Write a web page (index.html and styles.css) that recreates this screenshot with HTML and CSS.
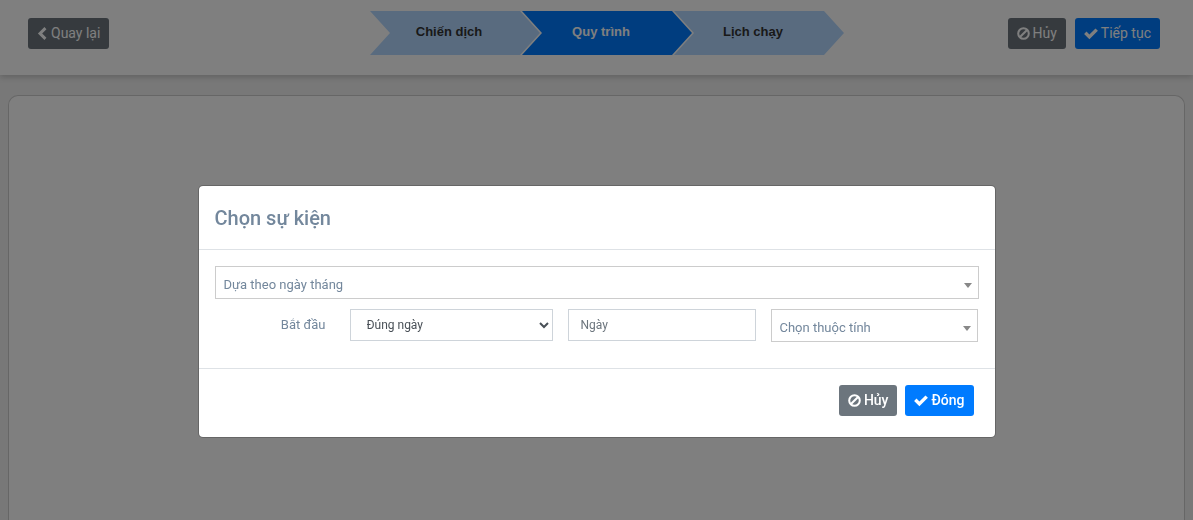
FILE: index.html
```
<!DOCTYPE html>
<html lang="vi">
<head>
<meta charset="utf-8">
<meta name="viewport" content="width=device-width, initial-scale=1">
<title>Chọn sự kiện</title>
<link rel="stylesheet" href="styles.css">
</head>
<body>
<svg class="sprite" aria-hidden="true">
  <symbol id="icon-back" viewBox="0 0 10 14"><path d="M9.800 2.300 5.200 7l4.600 4.700-2.200 2.200L.6 7 7.600.1z"/></symbol>
  <symbol id="icon-ban" viewBox="0 0 14 14"><circle cx="7" cy="7" r="5.700" fill="none" stroke="currentColor" stroke-width="2.200"/><path d="M3.200 10.800 10.800 3.200" fill="none" stroke="currentColor" stroke-width="2.200"/></symbol>
  <symbol id="icon-check" viewBox="0 0 14 14"><path d="M2.500 4.600 5.400 7.400 11.500 1.400 13.900 3.800 5.400 12.200.1 7z"/></symbol>
</svg>

<header class="topbar">
  <div class="topbar-side">
    <button type="button" class="btn btn-secondary"><svg class="icon icon-narrow"><use href="#icon-back"/></svg>Quay lại</button>
  </div>
  <ol class="steps">
    <li class="step">Chiến dịch</li>
    <li class="step step-active" aria-current="step">Quy trình</li>
    <li class="step">Lịch chạy</li>
  </ol>
  <div class="topbar-side topbar-end">
    <button type="button" class="btn btn-secondary"><svg class="icon"><use href="#icon-ban"/></svg>Hủy</button>
    <button type="button" class="btn btn-primary"><svg class="icon icon-wide"><use href="#icon-check"/></svg>Tiếp tục</button>
  </div>
</header>
<main class="canvas"></main>

<div class="backdrop">
  <form class="modal" role="dialog" aria-modal="true" aria-labelledby="modal-title">
    <div class="modal-header"><h1 class="modal-title" id="modal-title">Chọn sự kiện</h1></div>
    <div class="modal-body">
      <div class="picker">
        <select class="picker-select" aria-label="Sự kiện"><option>Dựa theo ngày tháng</option></select>
      </div>
      <div class="row">
        <label class="row-label" for="start">Bắt đầu</label>
        <select class="control control-select" id="start"><option>Đúng ngày</option></select>
        <input class="control" type="text" placeholder="Ngày" aria-label="Ngày">
        <div class="picker">
          <select class="picker-select" aria-label="Thuộc tính"><option>Chọn thuộc tính</option></select>
        </div>
      </div>
    </div>
    <div class="modal-footer">
      <button type="button" class="btn btn-secondary"><svg class="icon"><use href="#icon-ban"/></svg>Hủy</button>
      <button type="button" class="btn btn-primary"><svg class="icon icon-wide"><use href="#icon-check"/></svg>Đóng</button>
    </div>
  </form>
</div>
</body>
</html>
```
FILE: styles.css
```
* {
  box-sizing: border-box;
}

body {
  margin: 0;
  min-height: 100vh;
  display: flex;
  flex-direction: column;
  background: #f0f0f0;
  color: #73879c;
  font: 13px/20px Roboto, sans-serif;
}

.sprite {
  display: none;
}

.topbar {
  display: grid;
  grid-template-columns: 1fr auto 1fr;
  align-items: start;
  padding: 11px 33px 20px 28px;
  background: #fff;
  box-shadow: 0 2px 6px rgba(0, 0, 0, 0.2);
}

.topbar-side {
  display: flex;
  gap: 9px;
  padding-top: 7px;
}

.topbar-end {
  justify-content: flex-end;
}

.steps {
  display: flex;
  margin: 0;
  padding: 0 0 0 26px;
  list-style: none;
}

.step {
  width: 170px;
  height: 44px;
  padding-right: 12px;
  background: #b3d7ff;
  color: #333;
  font: 700 13px/41px "Liberation Sans", Arial, sans-serif;
  text-align: center;
  clip-path: polygon(0 0, 150px 0, 100% 50%, 150px 100%, 0 100%, 20px 50%);
}

.step + .step {
  margin-left: -18px;
}

.step-active {
  background: #007bff;
  color: #fff;
}

.btn {
  display: inline-flex;
  align-items: center;
  gap: 3px;
  padding: 4px 8px;
  border: 1px solid transparent;
  border-radius: 3px;
  color: #fff;
  font: 14px/21px Roboto, sans-serif;
}

.btn-secondary {
  background: #6c757d;
}

.btn-primary {
  background: #007bff;
}

.icon {
  width: 13px;
  height: 13px;
  fill: currentColor;
}

.icon-narrow {
  width: 10px;
  margin-right: 1px;
}

.icon-wide {
  width: 14px;
  height: 14px;
}

.canvas {
  flex: 1;
  margin: 20px 8px 0;
  border: 1px solid #ccc;
  border-bottom: 0;
  border-radius: 10px 10px 0 0;
  background: #fff;
}

.backdrop {
  position: fixed;
  inset: 0;
  display: flex;
  justify-content: center;
  align-items: flex-start;
  padding: 185px 16px 0;
  background: rgba(0, 0, 0, 0.5);
}

.modal {
  width: 100%;
  max-width: 798px;
  border: 1px solid rgba(0, 0, 0, 0.2);
  border-radius: 5px;
  background: #fff;
  background-clip: padding-box;
}

.modal-header {
  padding: 17px 16px 15px;
  border-bottom: 1px solid #dee2e6;
}

.modal-title {
  margin: 0;
  font-size: 20px;
  font-weight: 500;
  line-height: 31px;
}

.modal-body {
  display: flex;
  flex-direction: column;
  gap: 10px;
  padding: 16px 16px 26px;
}

.picker {
  position: relative;
  height: 33px;
}

.picker::after {
  content: "";
  position: absolute;
  right: 7px;
  top: 17px;
  border: 4px solid transparent;
  border-top: 5px solid #888;
  border-bottom: 0;
  pointer-events: none;
}

.picker-select {
  appearance: none;
  width: 100%;
  height: 100%;
  padding: 4px 24px 0 8px;
  border: 1px solid #ccc;
  border-radius: 0;
  background: #fff;
  color: #73879c;
  font: inherit;
}

.row {
  display: grid;
  grid-template-columns: 110px 203fr 188fr 207fr;
  column-gap: 15px;
  align-items: start;
  padding: 0 1px 0 10px;
}

.row-label {
  padding: 6px 9px 0 0;
  text-align: right;
}

.control {
  width: 100%;
  height: 32px;
  padding: 5px 12px;
  border: 1px solid #ced4da;
  border-radius: 0;
  background: #fff;
  color: #495057;
  font: 12px/18px Roboto, sans-serif;
}

.control::placeholder {
  color: #6c757d;
}

.control-select {
  padding-right: 0;
}

.modal-footer {
  display: flex;
  justify-content: flex-end;
  gap: 8px;
  padding: 16px 21px 21px;
  border-top: 1px solid #dee2e6;
}

.modal-footer .btn {
  font-weight: 500;
}
```
